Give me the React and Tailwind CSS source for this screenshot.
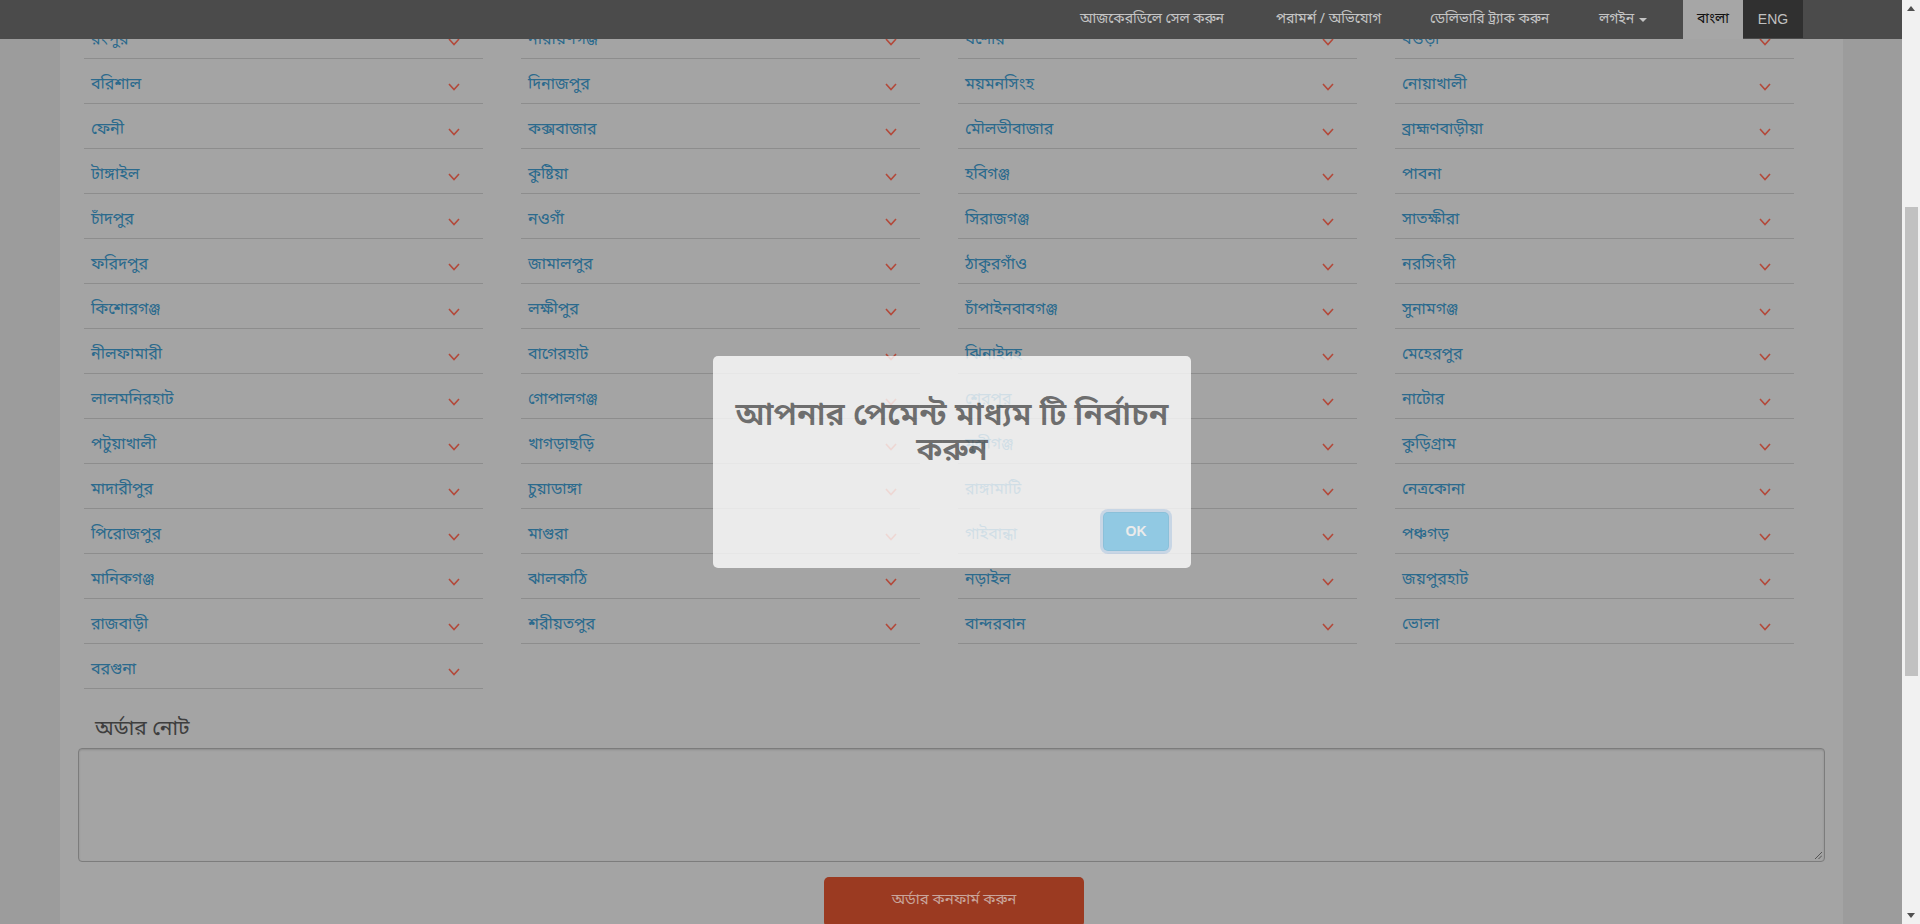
import React from "react";

const items = [
  "রংপুর","নারায়ণগঞ্জ","যশোর","বগুড়া",
  "বরিশাল","দিনাজপুর","ময়মনসিংহ","নোয়াখালী",
  "ফেনী","কক্সবাজার","মৌলভীবাজার","ব্রাহ্মণবাড়ীয়া",
  "টাঙ্গাইল","কুষ্টিয়া","হবিগঞ্জ","পাবনা",
  "চাঁদপুর","নওগাঁ","সিরাজগঞ্জ","সাতক্ষীরা",
  "ফরিদপুর","জামালপুর","ঠাকুরগাঁও","নরসিংদী",
  "কিশোরগঞ্জ","লক্ষীপুর","চাঁপাইনবাবগঞ্জ","সুনামগঞ্জ",
  "নীলফামারী","বাগেরহাট","ঝিনাইদহ","মেহেরপুর",
  "লালমনিরহাট","গোপালগঞ্জ","শেরপুর","নাটোর",
  "পটুয়াখালী","খাগড়াছড়ি","মুন্সীগঞ্জ","কুড়িগ্রাম",
  "মাদারীপুর","চুয়াডাঙ্গা","রাঙ্গামাটি","নেত্রকোনা",
  "পিরোজপুর","মাগুরা","গাইবান্ধা","পঞ্চগড়",
  "মানিকগঞ্জ","ঝালকাঠি","নড়াইল","জয়পুরহাট",
  "রাজবাড়ী","শরীয়তপুর","বান্দরবান","ভোলা",
  "বরগুনা",
];

function Chevron() {
  return (
    <svg width="12" height="8" viewBox="0 0 12 8" className="shrink-0">
      <polyline points="1,1 6,6.5 11,1" fill="none" stroke="#b3493a" strokeWidth="1.6" />
    </svg>
  );
}

export default function App() {
  return (
    <div
      className="relative w-[1920px] h-[924px] overflow-hidden flex bg-[#9c9c9c]"
      style={{ fontFamily: '"Noto Sans Bengali","Noto Sans","Liberation Sans",sans-serif' }}
    >
      {/* page */}
      <div className="w-[1902px] h-full">
        <div className="ml-[60px] w-[1783px] h-full bg-[#a4a4a4] pt-[14px]">
          <div className="ml-[24px] w-[1710px] grid grid-cols-4 gap-x-[38px]">
            {items.map((t, i) => (
              <div
                key={i}
                className="h-[45px] border-b border-[#8d8d8d] flex items-center justify-between pl-[7px] pr-[23px] pt-[7px]"
              >
                <span className="text-[16px] text-[#2b6a8d] leading-none">{t}</span>
                <span className="pt-[5px]"><Chevron /></span>
              </div>
            ))}
          </div>
          <div className="pl-[35px] pt-[27px] text-[21px] leading-[28px] text-[#3e3e3e]">অর্ডার নোট</div>
          <div className="ml-[18px] mt-[4px] w-[1747px] h-[114px] rounded-[4px] border border-[#7c7c7c] shadow-[inset_0_1px_2px_rgba(0,0,0,0.15)] relative">
            <svg width="8" height="8" viewBox="0 0 8 8" className="absolute right-[2px] bottom-[2px]">
              <line x1="1" y1="8" x2="8" y2="1" stroke="#555" strokeWidth="1" />
              <line x1="4.5" y1="8" x2="8" y2="4.5" stroke="#555" strokeWidth="1" />
            </svg>
          </div>
          <div className="mt-[15px] ml-[764px] w-[260px] h-[50px] rounded-[5px] bg-[#9b3a21] flex items-start justify-center pt-[12px]">
            <span className="text-[15px] text-[#c9a59b]">অর্ডার কনফার্ম করুন</span>
          </div>
        </div>
      </div>

      {/* scrollbar */}
      <div className="w-[18px] h-full bg-[#f1f1f1] relative">
        <div className="absolute left-[5px] top-[6px] w-0 h-0 border-l-[4px] border-r-[4px] border-b-[5px] border-l-transparent border-r-transparent border-b-[#505050]" />
        <div className="absolute left-[3px] top-[207px] w-[13px] h-[469px] bg-[#c1c1c1]" />
        <div className="absolute left-[5px] bottom-[6px] w-0 h-0 border-l-[4px] border-r-[4px] border-t-[5px] border-l-transparent border-r-transparent border-t-[#505050]" />
      </div>

      {/* navbar */}
      <div className="absolute top-0 left-0 w-[1902px] h-[39px] bg-[#4b4b4b] flex items-stretch text-[14px] text-[#c4c4c4]">
        <div className="ml-[1080px] w-[196px] flex items-center">আজকেরডিলে সেল করুন</div>
        <div className="w-[154px] flex items-center">পরামর্শ / অভিযোগ</div>
        <div className="w-[169px] flex items-center">ডেলিভারি ট্র্যাক করুন</div>
        <div className="w-[84px] flex items-center gap-[5px]">
          লগইন
          <span className="w-0 h-0 border-l-[4px] border-r-[4px] border-t-[4px] border-l-transparent border-r-transparent border-t-[#c4c4c4]" />
        </div>
        <div className="w-[60px] bg-[#a6a6a6] text-[#111] flex items-center justify-center">বাংলা</div>
        <div className="w-[60px] h-[38px] bg-[#303030] text-[#c0c0c0] flex items-center justify-center" style={{ fontFamily: '"Liberation Sans",sans-serif' }}>ENG</div>
      </div>

      {/* modal */}
      <div className="absolute left-[713px] top-[356px] w-[478px] h-[212px] rounded-[5px] bg-white opacity-[0.78] px-[12px] pt-[44px]">
        <div className="text-center text-[32px] font-semibold leading-[35px] text-[#606060]">
          আপনার পেমেন্ট মাধ্যম টি নির্বাচন করুন
        </div>
        <div className="absolute right-[22px] bottom-[17px] w-[66px] h-[39px] rounded-[5px] bg-[#8cd4f5] flex items-center justify-center text-white text-[14px] font-bold shadow-[0_0_0_3px_rgba(128,179,235,0.35),inset_0_0_0_1px_rgba(0,0,0,0.05)]" style={{ fontFamily: '"Liberation Sans",sans-serif' }}>
          OK
        </div>
      </div>
    </div>
  );
}
